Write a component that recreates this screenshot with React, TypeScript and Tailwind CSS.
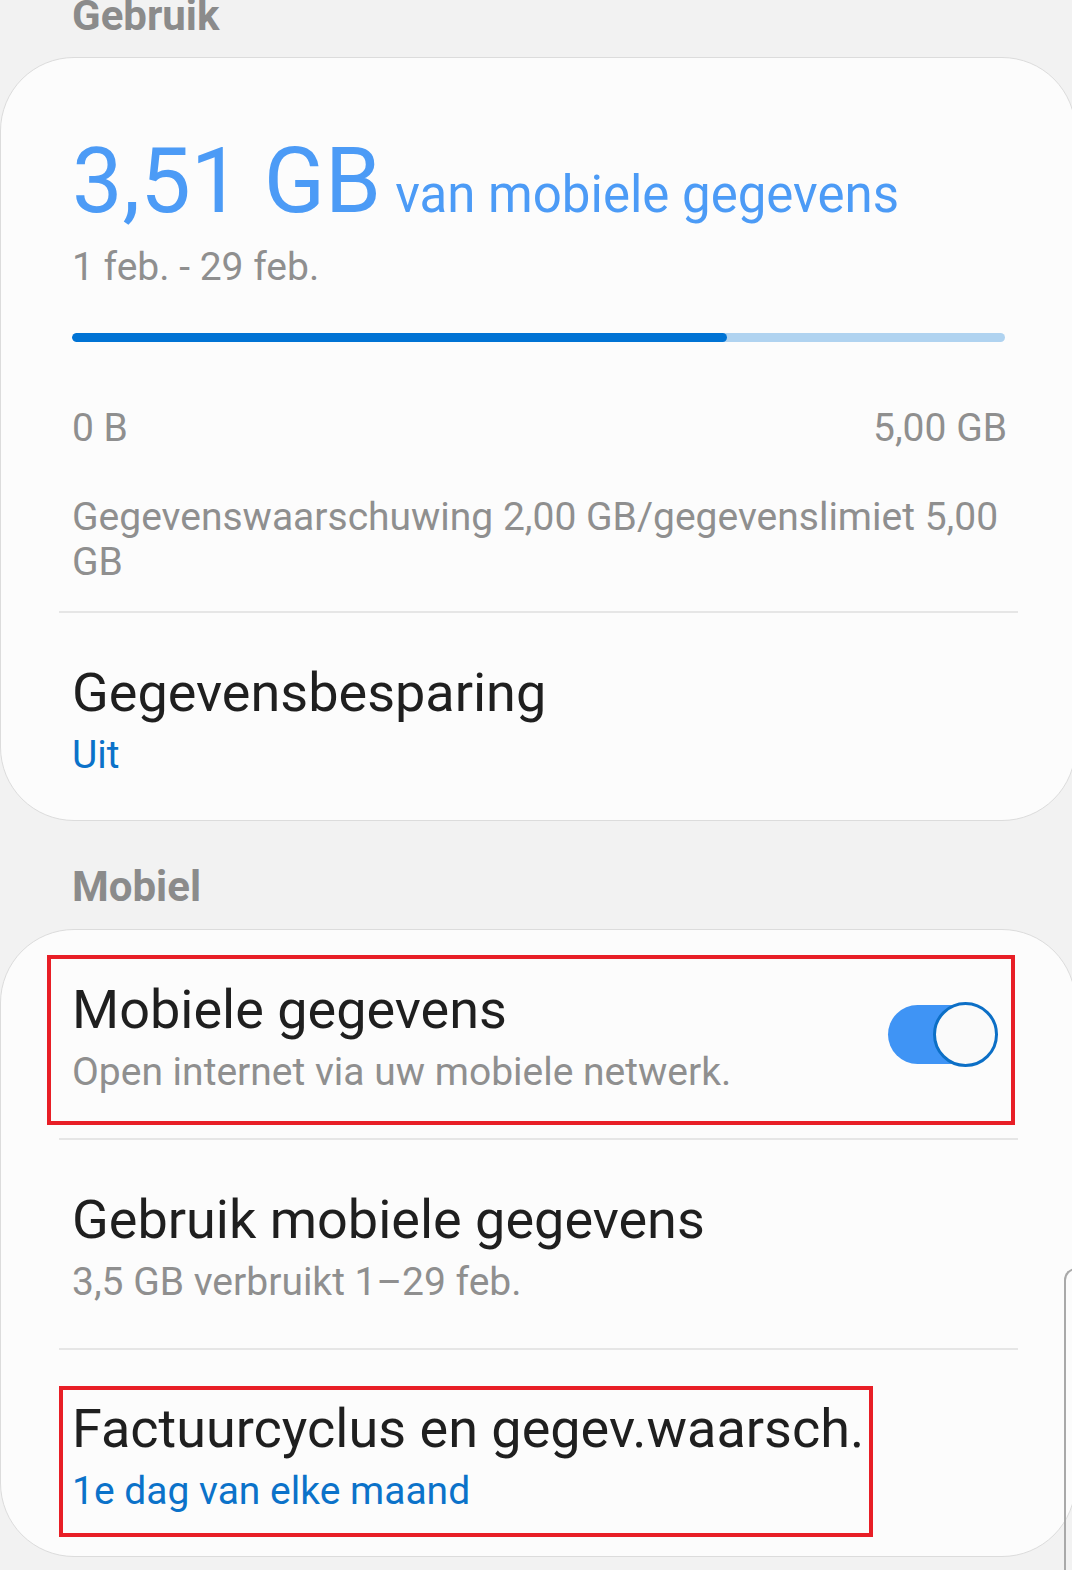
import React from "react";

function Divider() {
    return <div className="mx-[-13px] h-[2px] bg-[#e6e6e6]" />;
}

function Row({ title, sub, subClass, first, children }: { title: string; sub: string; subClass: string; first?: boolean; children?: React.ReactNode }) {
    return (
        <div className={`flex items-center ${first ? "pt-[49.5px]" : "pt-[48.5px]"} pb-[43px]`}>
            <div className="flex-1 min-w-0">
                <p className="text-[54px] leading-[62px] text-[#1f1f1f]">{title}</p>
                <p className={`mt-[8px] text-[39px] leading-[46px] ${subClass}`}>{sub}</p>
            </div>
            {children}
        </div>
    );
}

function Toggle() {
    return (
        <div className="relative mr-[7px] mb-[6px] w-[110px] h-[65px] flex-shrink-0">
            <div className="absolute left-0 top-[3px] w-[100px] h-[59px] rounded-full bg-[#3f94f5]" />
            <div className="absolute right-0 top-0 w-[65px] h-[65px] rounded-full bg-[#fafafa] border-[3px] border-[#0c6fc6]" />
        </div>
    );
}

export default function App() {
    return (
        <div className="relative w-[1072px] h-[1570px] overflow-hidden bg-[#f2f2f2] font-['Roboto',sans-serif]">
            {/* Gebruik */}
            <p className="mt-[-9px] pl-[72px] text-[42px] leading-[50px] font-bold text-[#8b8b8b]">Gebruik</p>

            <div className="mt-[16.4px] w-[1076px] rounded-[74px] border border-[#dcdcdc] bg-[#fcfcfc] pl-[71px] pr-[70px] pt-[79px] pb-[42px]">
                <div className="flex items-baseline leading-none text-[#4c9bf6]">
                    <span className="text-[90px] leading-[90px]">3,51 GB</span>
                    <span className="ml-[14px] text-[51px] leading-[51px]">van mobiele gegevens</span>
                </div>
                <p className="mt-[17px] text-[39px] leading-[46px] text-[#8f8f8f]">1 feb. - 29 feb.</p>

                <div className="mt-[43px] h-[9px] rounded-full bg-[#b0d3f0] overflow-hidden">
                    <div className="h-full rounded-full bg-[#0073d4]" style={{ width: `${(3.51 / 5) * 100}%` }} />
                </div>

                <div className="mt-[63px] mr-[-2px] flex justify-between text-[39px] leading-[46px] text-[#8f8f8f]">
                    <span>0 B</span>
                    <span>5,00 GB</span>
                </div>

                <p className="mt-[43.5px] mb-[26.5px] text-[39px] leading-[45px] text-[#8f8f8f]">
                    Gegevenswaarschuwing 2,00 GB/gegevenslimiet 5,00 GB
                </p>
                <Divider />

                <div className="pt-[48.5px]">
                    <p className="text-[54px] leading-[62px] text-[#1f1f1f]">Gegevensbesparing</p>
                    <p className="mt-[8px] text-[39px] leading-[46px] text-[#0b72c9]">Uit</p>
                </div>
            </div>

            {/* Mobiel */}
            <p className="mt-[41.6px] pl-[72px] text-[42px] leading-[50px] font-bold text-[#8b8b8b]">Mobiel</p>

            <div className="mt-[16.4px] w-[1076px] rounded-[74px] border border-[#dcdcdc] bg-[#fcfcfc] pl-[71px] pr-[70px]">
                <Row first title="Mobiele gegevens" sub="Open internet via uw mobiele netwerk." subClass="text-[#8f8f8f]">
                    <Toggle />
                </Row>
                <Divider />
                <Row title="Gebruik mobiele gegevens" sub="3,5 GB verbruikt 1–29 feb." subClass="text-[#8f8f8f]" />
                <Divider />
                <div className="pt-[48.5px] pb-[42px]">
                    <p className="text-[54px] leading-[62px] text-[#1f1f1f]">Factuurcyclus en gegev.waarsch.</p>
                    <p className="mt-[8px] text-[39px] leading-[46px] text-[#0b72c9]">1e dag van elke maand</p>
                </div>
            </div>

            {/* annotation boxes */}
            <div className="absolute left-[47px] top-[955px] w-[968px] h-[170px] border-[4px] border-[#e81e26]" />
            <div className="absolute left-[59px] top-[1386px] w-[814px] h-[151px] border-[4px] border-[#e81e26]" />

            {/* edge of panel peeking in */}
            <div className="absolute left-[1064px] top-[1268px] w-[30px] h-[320px] rounded-tl-[12px] border-l-2 border-t-2 border-[#a9a9a9]" />
        </div>
    );
}
